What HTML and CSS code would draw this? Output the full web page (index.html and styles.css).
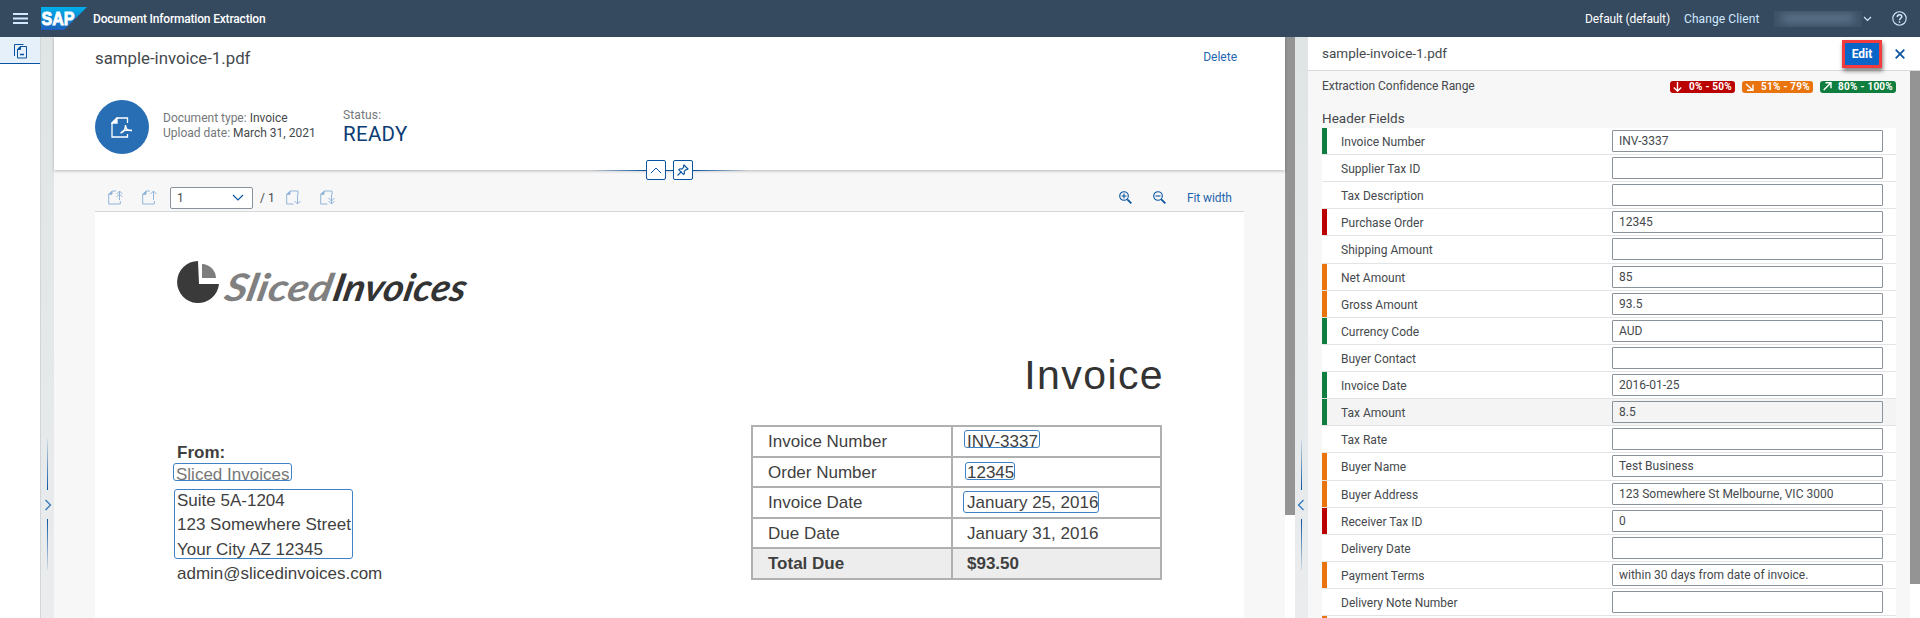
FILE: index.html
```html
<!DOCTYPE html>
<html lang="en">
<head>
<meta charset="utf-8">
<title>Document Information Extraction</title>
<link rel="stylesheet" href="styles.css">
</head>
<body>
<header class="shell">
  <svg class="menu" width="15" height="11" viewBox="0 0 15 11"><path d="M0 1h15M0 5.500h15M0 10h15" stroke="#d1e8ff" stroke-width="2"/></svg>
  <svg class="sap" width="46" height="23" viewBox="0 0 46 23">
    <defs><linearGradient id="sapfill" x1="0" y1="0" x2="0" y2="1"><stop offset="0" stop-color="#00b1eb"/><stop offset="1" stop-color="#1e5fbb"/></linearGradient></defs>
    <path d="M0 0h46L23 23H0z" fill="url(#sapfill)"/>
    <text class="sap-text" x="0.500" y="18" textLength="33" lengthAdjust="spacingAndGlyphs">SAP</text>
  </svg>
  <span class="app-name">Document Information Extraction</span>
  <span class="tenant">Default (default)</span>
  <span class="client">Change Client</span>
  <span class="user"><i></i></span>
  <svg class="user-arrow" width="9" height="6" viewBox="0 0 9 6"><path d="M1 1l3.500 3.500L8 1" fill="none" stroke="#d1e8ff" stroke-width="1.200"/></svg>
  <svg class="help" width="15" height="15" viewBox="0 0 15 15"><circle cx="7.500" cy="7.500" r="6.700" fill="none" stroke="#d1e8ff" stroke-width="1.100"/><path d="M5.300 5.900c0-3 4.500-2.900 4.500-.300 0 1.700-2.300 1.600-2.300 3.600M7.500 10.300v1.400" fill="none" stroke="#d1e8ff" stroke-width="1.500"/></svg>
</header>
<div class="body">
  <nav class="side">
    <div class="side-item">
      <svg width="14" height="15" viewBox="0 0 14 15" fill="none" stroke="#0854a0"><path d="M9.500.5H.5v11.500"/><path d="M6 2.500h6.500v11.500h-9V5.500z"/><path d="M3.500 5.500h3V2.500z" fill="#0854a0"/><path d="M6 10.500h4" stroke-width="1.500"/></svg>
    </div>
  </nav>
  <div class="splitter left">
    <i class="bar up"></i>
    <svg width="8" height="12" viewBox="0 0 8 12"><path d="M1.500 1l5 5-5 5" fill="none" stroke="#2a75bb" stroke-width="1.200"/></svg>
    <i class="bar down"></i>
  </div>
  <main class="main">
    <section class="object-header">
      <div class="title-row"><h1>sample-invoice-1.pdf</h1><span class="link delete">Delete</span></div>
      <div class="facts">
        <span class="avatar"><svg width="22" height="21" viewBox="0 0 22 21" fill="none" stroke="#fff" stroke-width="1.300"><path d="M16.500 6V1H6L1 6v14h15.500v-3"/><path d="M1 6h5V1z" fill="#fff"/><path d="M9.500 16c3-1 5-4 5-7.500M14.500 8c0 4 2 6 6.500 5.500M11 14.500c3-1.500 6-2 10-1" stroke-width="1.500"/></svg></span>
        <div class="meta"><p><b>Document type:</b> Invoice</p><p><b>Upload date:</b> March 31, 2021</p></div>
        <div class="status"><p>Status:</p><strong>READY</strong></div>
      </div>
      <div class="handle">
        <i class="ray in"></i>
        <span class="hbtn"><svg width="12" height="7" viewBox="0 0 12 7"><path d="M1 6l5-5 5 5" fill="none" stroke="#0854a0"/></svg></span>
        <i class="link-line"></i>
        <span class="hbtn"><svg width="12" height="12" viewBox="0 0 12 12" fill="none" stroke="#0854a0" stroke-width="1.100"><path d="M0.500 11.500l4-4"/><path d="M7 1l4 4-1 .7-1-.200-1.800 1.800.300 2.200L6.500 10.500 1.800 5.800l1.200-1 2 .3L6.700 3.200l-.300-1.300z"/></svg></span>
        <i class="ray out"></i>
      </div>
    </section>
    <section class="viewer">
      <div class="toolbar">
        <svg class="t1" width="15" height="15" viewBox="0 0 15 15"><g class="pg"><path d="M8 1H4L.7 4.300V14h11.600v-3"/><path d="M.7 4.300H4V1z" class="fold"/><path d="M11.500 1v9M8.500 4l3-3 3 3M8.500 7l3-3 3 3"/></g></svg>
        <svg class="t2" width="15" height="15" viewBox="0 0 15 15"><g class="pg"><path d="M8 1H4L.7 4.300V14h11.600v-3"/><path d="M.7 4.300H4V1z" class="fold"/><path d="M11.500 1v9M8.500 4l3-3 3 3"/></g></svg>
        <div class="select"><span>1</span><svg width="12" height="7" viewBox="0 0 12 7"><path d="M1 1l5 5 5-5" fill="none" stroke="#0854a0" stroke-width="1.200"/></svg></div>
        <span class="total">/ 1</span>
        <svg class="t3" width="15" height="15" viewBox="0 0 15 15"><g class="pg"><path d="M7.500 14H.7V4.300L4 1h8v4"/><path d="M.7 4.300H4V1z" class="fold"/><path d="M11.500 5v9M8.500 11l3 3 3-3"/></g></svg>
        <svg class="t4" width="15" height="15" viewBox="0 0 15 15"><g class="pg"><path d="M7.500 14H.7V4.300L4 1h8v4"/><path d="M.7 4.300H4V1z" class="fold"/><path d="M11.500 5v9M8.500 8l3 3 3-3M8.500 11l3 3 3-3"/></g></svg>
        <svg class="zin" width="13" height="13" viewBox="0 0 13 13"><g class="zm"><circle cx="5" cy="5" r="4.300"/><path d="M2.500 5h5M5 2.500v5"/><path d="M8.300 8.300l4 4" stroke-width="1.800"/></g></svg>
        <svg class="zout" width="13" height="13" viewBox="0 0 13 13"><g class="zm"><circle cx="5" cy="5" r="4.300"/><path d="M2.500 5h5"/><path d="M8.300 8.300l4 4" stroke-width="1.800"/></g></svg>
        <span class="link fit">Fit width</span>
      </div>
      <article class="page">
        <svg class="brand" width="310" height="52" viewBox="0 0 310 52">
          <path d="M21 1A21 21 0 1 0 42 24H22z" fill="#3a3a3a"/>
          <path d="M25 4a14.500 14.500 0 0 1 14 14H25z" fill="#7d7d7d"/>
          <g transform="translate(0 41) skewX(-12)">
            <text class="script gray" x="46" y="0" textLength="107" lengthAdjust="spacingAndGlyphs">Sliced</text>
            <text class="script" x="154" y="0" textLength="133" lengthAdjust="spacingAndGlyphs">Invoices</text>
          </g>
        </svg>
        <h2>Invoice</h2>
        <div class="columns">
          <address>
            <b>From:</b>
            <span class="vendor">Sliced Invoices<i class="mark m-vendor"></i></span>
            <span class="street">Suite 5A-1204<i class="mark m-street"></i></span>
            <span>123 Somewhere Street</span>
            <span>Your City AZ 12345</span>
            <span class="mail">admin@slicedinvoices.com</span>
          </address>
          <div class="summary">
            <div>Invoice Number</div><div>INV-3337<i class="mark m-no"></i></div>
            <div>Order Number</div><div>12345<i class="mark m-order"></i></div>
            <div>Invoice Date</div><div>January 25, 2016<i class="mark m-date"></i></div>
            <div>Due Date</div><div>January 31, 2016</div>
            <div class="sum">Total Due</div><div class="sum">$93.50</div>
          </div>
        </div>
      </article>
    </section>
  </main>
  <div class="scroll main-scroll"><i></i></div>
  <div class="splitter right">
    <i class="bar up"></i>
    <svg width="8" height="12" viewBox="0 0 8 12"><path d="M6.500 1l-5 5 5 5" fill="none" stroke="#2a75bb" stroke-width="1.200"/></svg>
    <i class="bar down"></i>
  </div>
  <aside class="panel">
    <div class="panel-head"><span class="file">sample-invoice-1.pdf</span><span class="edit">Edit</span>
      <svg width="10" height="10" viewBox="0 0 10 10"><path d="M.7.7l8.600 8.600M9.300.7L.7 9.300" stroke="#0854a0" stroke-width="1.700"/></svg></div>
    <div class="panel-row">
      <div class="panel-body">
        <div class="range"><span class="range-label">Extraction Confidence Range</span>
          <span class="tag low"><svg width="9" height="10" viewBox="0 0 9 10"><path d="M4.500 0v9M.8 5.500l3.700 3.700 3.700-3.700"/></svg>0% - 50%</span>
          <span class="tag mid"><svg width="9" height="10" viewBox="0 0 9 10"><path d="M1 2l6.500 6M2 8.300h6V2.500"/></svg>51% - 79%</span>
          <span class="tag high"><svg width="9" height="10" viewBox="0 0 9 10"><path d="M.7 8l7-7M2.500.8H8v5.500"/></svg>80% - 100%</span>
        </div>
        <h3>Header Fields</h3>
        <div class="fields">
          <div class="row g"><label>Invoice Number</label><span class="input">INV-3337</span></div>
          <div class="row"><label>Supplier Tax ID</label><span class="input"></span></div>
          <div class="row"><label>Tax Description</label><span class="input"></span></div>
          <div class="row r"><label>Purchase Order</label><span class="input">12345</span></div>
          <div class="row tall"><label>Shipping Amount</label><span class="input"></span></div>
          <div class="row o"><label>Net Amount</label><span class="input">85</span></div>
          <div class="row o"><label>Gross Amount</label><span class="input">93.5</span></div>
          <div class="row g"><label>Currency Code</label><span class="input">AUD</span></div>
          <div class="row"><label>Buyer Contact</label><span class="input"></span></div>
          <div class="row g"><label>Invoice Date</label><span class="input">2016-01-25</span></div>
          <div class="row g hover"><label>Tax Amount</label><span class="input">8.5</span></div>
          <div class="row"><label>Tax Rate</label><span class="input"></span></div>
          <div class="row o tall"><label>Buyer Name</label><span class="input">Test Business</span></div>
          <div class="row o"><label>Buyer Address</label><span class="input">123 Somewhere St Melbourne, VIC 3000</span></div>
          <div class="row r"><label>Receiver Tax ID</label><span class="input">0</span></div>
          <div class="row"><label>Delivery Date</label><span class="input"></span></div>
          <div class="row o"><label>Payment Terms</label><span class="input">within 30 days from date of invoice.</span></div>
          <div class="row"><label>Delivery Note Number</label><span class="input"></span></div>
          <div class="row o"></div>
        </div>
      </div>
      <div class="scroll panel-scroll"><i></i></div>
    </div>
  </aside>
</div>
</body>
</html>
```
FILE: styles.css
```css
* { box-sizing: border-box; }
body { margin: 0; width: 1920px; height: 618px; overflow: hidden; font: 12px/15px Roboto, "Noto Sans", sans-serif; color: #45494d; background: #fff; }
h1, h2, h3, p { margin: 0; font-weight: normal; }
svg { display: block; flex: none; }
.link { color: #1f66ae; }

.shell { display: flex; align-items: center; height: 37px; background: #354a5f; color: #fff; padding: 0 13px; white-space: nowrap; }
.shell > span { position: relative; top: 1px; }
.sap { margin: 0 6px 0 13px; }
.sap-text { font: bold 19px "Liberation Sans", sans-serif; fill: #fff; stroke: #fff; stroke-width: .9; }
.app-name { font-weight: 500; letter-spacing: -.18px; }
.tenant { margin-left: auto; letter-spacing: -.12px; }
.client { color: #d1e8ff; margin-left: 14px; width: 75px; letter-spacing: .1px; }
.shell > .user { top: 0; width: 88px; height: 16px; margin: 0 0 0 15px; background: #3d5267; display: flex; align-items: center; justify-content: center; overflow: hidden; }
.user i { width: 72px; height: 7px; background: #647b92; filter: blur(4px); }
.user-arrow { margin: 0 20px 0 1px; }

.body { display: flex; height: 581px; }
.side { width: 40px; }
.side-item { height: 27px; background: #e5f0fa; border-bottom: 1px solid #0854a0; padding: 7px 0 0 14px; }
.splitter { width: 14px; flex: none; display: flex; flex-direction: column; align-items: center; background: linear-gradient(#dfe4e4, #eaecee); padding-top: 402px; }
.splitter.left { border-left: 1px solid #d3d6d8; }
.splitter.right { width: 13px; }
.splitter svg { margin: 9px 0 8px; }
.splitter.right svg { margin-right: 2px; }
.splitter .bar { width: 1px; height: 51px; }
.bar.up { background: linear-gradient(#d3dde6, #0854a0); }
.bar.down { background: linear-gradient(#0854a0, #d3dde6); }

.main { width: 1231px; background: #f7f7f7; display: flex; flex-direction: column; }
.object-header { height: 133px; flex: none; background: #fff; box-shadow: 0 1px 3px rgba(0,0,0,.25); position: relative; padding: 0 48px 0 41px; }
.title-row { display: flex; justify-content: space-between; align-items: center; height: 41px; }
.title-row h1 { font-size: 16.8px; line-height: 20px; }
.facts { display: flex; padding-top: 22px; }
.avatar { width: 54px; height: 54px; border-radius: 50%; background: #286eb4; display: flex; align-items: center; justify-content: center; }
.meta { margin: 11px 0 0 14px; width: 180px; font-size: 12px; }
.meta b { font-weight: normal; color: #74777a; }
.meta p, .status p { white-space: nowrap; }
.status { padding-top: 8px; }
.status p { color: #74777a; letter-spacing: .15px; }
.status strong { display: block; font-weight: normal; font-size: 20.5px; line-height: 22px; color: #0b3c73; letter-spacing: .3px; }
.handle { position: absolute; left: 536px; bottom: -10px; display: flex; align-items: center; }
.hbtn { width: 20px; height: 20px; border: 1px solid #0854a0; border-radius: 2px; background: #fff; display: flex; align-items: center; justify-content: center; }
.ray { width: 56px; height: 1px; }
.ray.in { background: linear-gradient(90deg, rgba(8,84,160,0), #0854a0); }
.ray.out { background: linear-gradient(90deg, #0854a0, rgba(8,84,160,0)); }
.link-line { width: 7px; height: 1px; background: #0854a0; }

.viewer { padding: 0 41px; flex: 1; }
.toolbar { display: flex; align-items: center; height: 42px; padding: 14px 14px 0 13px; border-bottom: 1px solid #d5d7d9; }
.pg { fill: none; stroke: #91b5d8; stroke-width: 1; }
.pg .fold { fill: #91b5d8; }
.zm { fill: none; stroke: #0854a0; stroke-width: 1.1; }
.t2 { margin-left: 19px; }
.select { width: 83px; height: 22px; margin-left: 13px; border: 1px solid #89919a; border-radius: 2px; background: #fff; display: flex; align-items: center; justify-content: space-between; padding: 0 8px 0 6px; }
.select span { padding-top: 1px; }
.total { margin-left: 7px; width: 14px; padding-top: 1px; white-space: nowrap; }
.t3 { margin-left: 12px; }
.t4 { margin-left: 19px; }
.zin { margin-left: auto; }
.zout { margin: 0 21px; }
.fit { width: 43px; padding-top: 1px; white-space: nowrap; letter-spacing: -.1px; }
.page { height: 406px; background: #fff; padding: 48px 82px 0; font-family: "Liberation Sans", Arial, sans-serif; color: #3f3f3f; font-size: 17px; }
.script { font: italic bold 38px Lato, sans-serif; fill: #333; }
.script.gray { fill: #808080; }
.page h2 { text-align: right; font-size: 41px; line-height: 48px; letter-spacing: 1.4px; margin: 39px -2px 0 0; color: #333; }
.columns { display: flex; justify-content: space-between; }
address { font-style: normal; padding-top: 42px; display: flex; flex-direction: column; }
address > * { height: 24.3px; line-height: 24px; position: relative; white-space: nowrap; }
address b { height: 22px; }
.vendor { color: #777; height: 26px; left: -1px; }
.summary { width: 411px; height: 155px; margin-top: 26px; display: grid; grid-template-columns: 198px 1fr; grid-template-rows: repeat(5, 28.6px); gap: 2px; padding: 2px; background: #b0b0b0; line-height: 29px; }
.summary > div { background: #fff; padding-left: 14px; position: relative; white-space: nowrap; }
.summary > div:nth-child(odd) { padding-left: 15px; }
.summary > .sum { background: #ededed; font-weight: bold; }
.mark { position: absolute; border: 1px solid #3c82c4; border-radius: 3px; }
.m-vendor { left: -3px; top: 0; width: 119px; height: 18px; }
.m-street { left: -3px; top: 0; width: 179px; height: 70px; }
.m-no { left: 11px; top: 3px; width: 76px; height: 18px; }
.m-order { left: 12px; top: 4px; width: 50px; height: 18px; }
.m-date { left: 10px; top: 3px; width: 136px; height: 22px; }

.scroll { width: 10px; flex: none; background: #fff; }
.scroll i { display: block; background: #949494; }
.main-scroll i { height: 478px; }
.panel-scroll i { height: 513px; }

.panel { width: 612px; background: #f7f7f7; display: flex; flex-direction: column; }
.panel-head { height: 34px; background: #fff; border-bottom: 1px solid #d9d9d9; display: flex; align-items: center; padding: 0 15px 0 14px; flex: none; z-index: 1; }
.file { font-size: 13.5px; }
.edit { margin-left: auto; margin-right: 13px; width: 40px; height: 28px; border: 3px solid #f43c3f; background: #0a65c8; color: #fff; font-weight: bold; padding-top: 1px; display: flex; align-items: center; justify-content: center; box-shadow: 1px 3px 4px rgba(0,0,0,.5); }
.panel-row { display: flex; flex: 1; min-height: 0; }
.panel-body { width: 602px; padding: 0 14px; }
.range { display: flex; height: 31px; align-items: center; }
.range-label { margin-right: auto; letter-spacing: -.05px; }
.tag { height: 12px; margin-left: 7px; border-radius: 3px; color: #fff; font-weight: bold; font-size: 10px; letter-spacing: .25px; line-height: 12px; display: flex; align-items: center; justify-content: space-between; padding: 0 3px; white-space: nowrap; }
.tag svg { fill: none; stroke: #fff; stroke-width: 1.4; }
.low { width: 65px; background: #b00; }
.mid { width: 71px; background: #e9730c; }
.high { width: 76px; background: #107e3e; }
.panel h3 { font-size: 13.5px; line-height: 16px; height: 26px; padding-top: 8px; }
.row { height: 27px; background: #fff; border-bottom: 1px solid #e3e3e3; display: flex; align-items: flex-start; padding: 2px 13px 0 19px; position: relative; }
.row.tall { height: 28px; }
.row.hover { background: #f4f4f4; }
.row label { flex: 1; line-height: 24px; }
.row::before { content: ""; position: absolute; left: 0; top: 0; bottom: 0; width: 5px; }
.g::before { background: #107e3e; }
.r::before { background: #b00; }
.o::before { background: #e9730c; }
.input { width: 271px; height: 22px; border: 1px solid #89919a; border-radius: 1px; padding-left: 6px; line-height: 21px; }
```
